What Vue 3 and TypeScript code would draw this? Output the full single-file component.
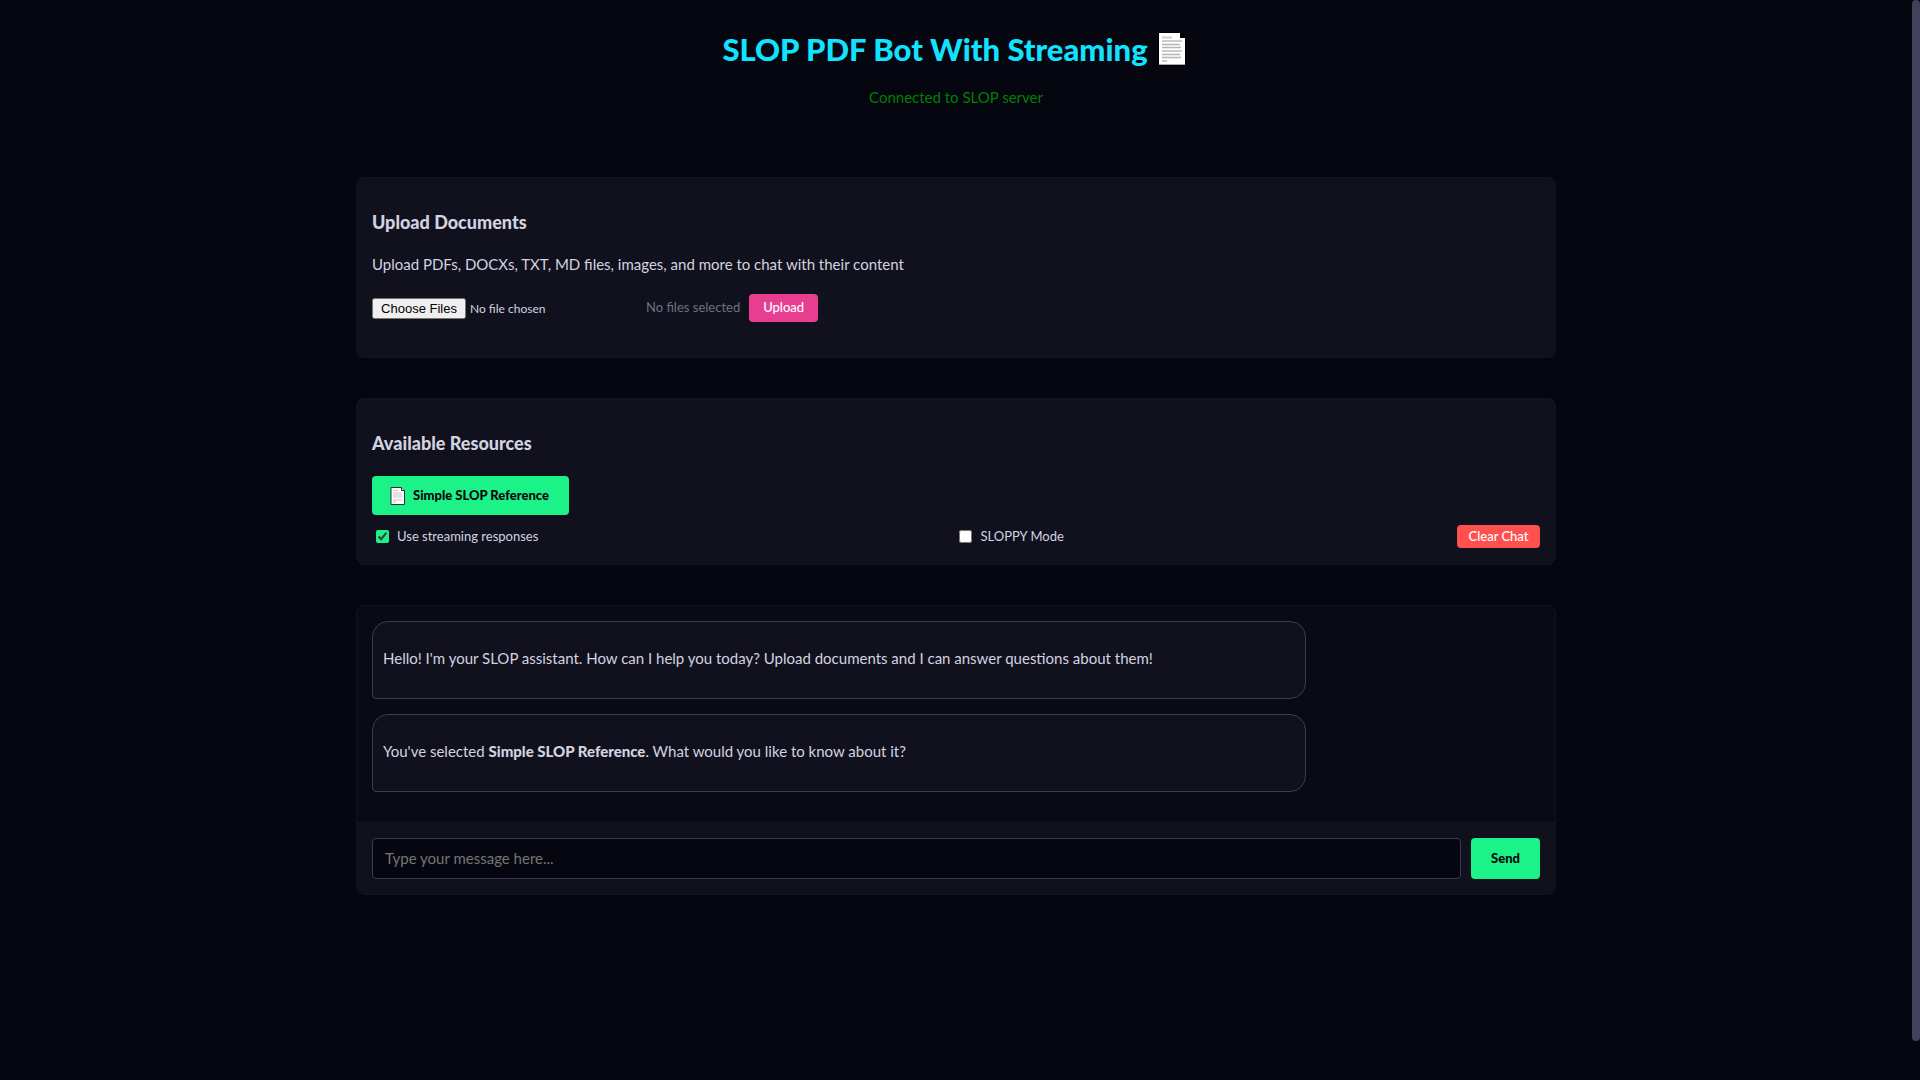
<script setup lang="ts">
import { ref } from 'vue'

interface Message {
  id: number
  before: string
  strong?: string
  after?: string
}

const streaming = ref(true)
const sloppy = ref(false)
const draft = ref('')

const resources = ['Simple SLOP Reference']

const messages: Message[] = [
  {
    id: 1,
    before:
      "Hello! I'm your SLOP assistant. How can I help you today? Upload documents and I can answer questions about them!",
  },
  {
    id: 2,
    before: "You've selected ",
    strong: 'Simple SLOP Reference',
    after: '. What would you like to know about it?',
  },
]
</script>

<template>
  <div class="page">
    <header class="header">
      <h1>
        <span>SLOP PDF Bot With Streaming</span>
        <svg class="title-doc" viewBox="0 0 28 34" aria-hidden="true">
          <path d="M0 0H23L28 5V34H0Z" fill="#000" />
          <path d="M1 1H22V6H27V33H1Z" fill="#fff" />
          <path d="M1 32.5H27" stroke="#aaa" />
          <path d="M4 5.5H14" stroke="#ccc" stroke-width="2" />
          <path d="M4 9H24M4 19H24" stroke="#999" />
          <path d="M4 12.5H22M4 15.5H23M4 22.5H22M4 25.5H23" stroke="#b5b5b5" stroke-width="1.5" />
          <path d="M4 29H9" stroke="#999" />
        </svg>
      </h1>
      <p class="status">Connected to SLOP server</p>
    </header>

    <main class="content">
      <section class="card upload">
        <h3>Upload Documents</h3>
        <p class="lead">Upload PDFs, DOCXs, TXT, MD files, images, and more to chat with their content</p>
        <form class="upload-row" @submit.prevent>
          <input class="file" type="file" multiple aria-label="Choose files" />
          <span class="file-info">No files selected</span>
          <button class="btn-upload" type="submit">Upload</button>
        </form>
      </section>

      <section class="card resources">
        <h3>Available Resources</h3>
        <div class="resource-list">
          <button v-for="name in resources" :key="name" class="btn-resource" type="button">
            <svg class="resource-doc" viewBox="0 0 15 18" aria-hidden="true">
              <path d="M1 .5H11.500L14.500 3.500V17.500H1Z" fill="#fff" stroke="#28323a" />
              <path d="M11.500 .5V3.500H14.500" fill="#ddd" stroke="#28323a" />
              <path d="M3 3.500H8M3 6H12.500M3 8H12M3 10H12.500M3 13H12.500M3 15H6" stroke="#c4c4c4" />
            </svg>
            <span>{{ name }}</span>
          </button>
        </div>
        <div class="options">
          <label class="streaming"><input v-model="streaming" type="checkbox" /><span>Use streaming responses</span></label>
          <label><input v-model="sloppy" type="checkbox" /><span>SLOPPY Mode</span></label>
          <button class="btn-clear" type="button">Clear Chat</button>
        </div>
      </section>

      <section class="chat">
        <div class="messages">
          <div v-for="m in messages" :key="m.id" class="message">
            <p>{{ m.before }}<strong v-if="m.strong">{{ m.strong }}</strong>{{ m.after }}</p>
          </div>
        </div>
        <form class="composer" @submit.prevent>
          <input v-model="draft" type="text" placeholder="Type your message here..." aria-label="Message" />
          <button class="btn-send" type="submit">Send</button>
        </form>
      </section>
    </main>
    <div class="scroll-thumb" aria-hidden="true"></div>
  </div>
</template>

<style>
body {
  margin: 0;
  background: #05060f;
}
</style>

<style scoped>
* {
  box-sizing: border-box;
}

.page {
  min-height: 100vh;
  padding: 0 8px 0 0;
  background: #05060f;
  color: #d3d3e0;
  font-family: Lato, sans-serif;
  font-size: 15px;
  line-height: 24px;
}

button,
input {
  font-family: inherit;
}

button {
  padding-bottom: 2px;
  border: 0;
  border-radius: 4px;
  cursor: pointer;
}

.header {
  display: flex;
  flex-direction: column;
  align-items: center;
  gap: 18px;
  height: 177px;
  padding-top: 29px;
}

h1 {
  display: flex;
  align-items: center;
  gap: 10px;
  margin: 0;
  color: #12e2ff;
  font-size: 31px;
  font-weight: 900;
  line-height: 40px;
}

.title-doc {
  width: 28px;
  height: 34px;
  margin-right: 4px;
}

.status {
  margin: 0;
  color: #008000;
  line-height: 20px;
}

.content {
  display: flex;
  flex-direction: column;
  gap: 40px;
  max-width: 1200px;
  margin: 0 auto;
}

.card {
  padding: 32px 15px 15px;
  border: 1px solid #141420;
  border-radius: 8px;
  background: #11111d;
}

h3 {
  margin: 0;
  font-size: 18px;
  font-weight: 900;
  line-height: 24px;
}

strong {
  font-weight: 900;
}

.lead {
  margin: 18px 0;
}

.upload {
  padding-bottom: 35px;
}

.resources {
  padding-bottom: 16px;
}

.upload-row {
  display: flex;
  align-items: center;
}

.file {
  width: 274px;
  padding: 0;
  font-size: 12px;
}

.file::file-selector-button {
  width: 94px;
  height: 21px;
  padding: 0;
  font-family: "Liberation Sans", sans-serif;
  font-size: 13px;
}

.file-info {
  padding-bottom: 2px;
  color: #6b7280;
  font-size: 13px;
}

.btn-upload {
  width: 69px;
  height: 28px;
  margin-left: 9px;
  padding: 0 0 2px;
  background: #e83e92;
  color: #fff;
  font-size: 13px;
  font-weight: 500;
}

.resource-list {
  display: flex;
  gap: 8px;
  margin: 21px 0 10px;
}

.btn-resource {
  display: flex;
  align-items: center;
  gap: 8px;
  height: 39px;
  padding: 0 20px 0 18px;
  background: #1bf287;
  color: #05060f;
  font-size: 13px;
  font-weight: 900;
}

.btn-resource span {
  padding-bottom: 2px;
}

.resource-doc {
  width: 15px;
  height: 18px;
}

.options {
  display: flex;
  align-items: center;
  justify-content: space-between;
  height: 23px;
}

.options label {
  display: flex;
  align-items: center;
  gap: 8px;
  font-size: 13px;
}

.options span {
  padding-bottom: 2px;
}

.options .streaming {
  margin-right: 24px;
}

.options input {
  width: 13px;
  height: 13px;
  margin: 0 0 0 4px;
  accent-color: #1bf287;
}

.btn-clear {
  width: 83px;
  height: 23px;
  padding: 0 0 2px;
  background: #ff5050;
  color: #fff;
  font-size: 13px;
  font-weight: 500;
}

.chat {
  overflow: hidden;
  border: 1px solid #141420;
  border-radius: 8px;
  background: #0a0a15;
}

.messages {
  display: flex;
  flex-direction: column;
  gap: 15px;
  padding: 15px 15px 30px;
}

.message {
  width: 80%;
  padding: 24px 10px 28px;
  border: 1px solid #3c3a55;
  border-radius: 16px 16px 16px 4px;
  background: #11111d;
}

.message p {
  margin: 0;
}

.composer {
  display: flex;
  gap: 10px;
  padding: 15px;
  border-top: 1px solid #141420;
  background: #11111d;
}

.composer input {
  flex: 1;
  min-width: 0;
  height: 41px;
  padding: 0 12px 2px;
  border: 1px solid #3c3a55;
  border-radius: 4px;
  background: #05060f;
  color: #d3d3e0;
  font-size: 15px;
}

.composer input::placeholder {
  color: #757575;
}

.btn-send {
  width: 69px;
  background: #1bf287;
  color: #05060f;
  font-size: 13px;
  font-weight: 900;
}

.scroll-thumb {
  position: fixed;
  top: 0;
  right: 0;
  width: 8px;
  height: 96.4vh;
  border-radius: 4px;
  background: #434159;
}
</style>
